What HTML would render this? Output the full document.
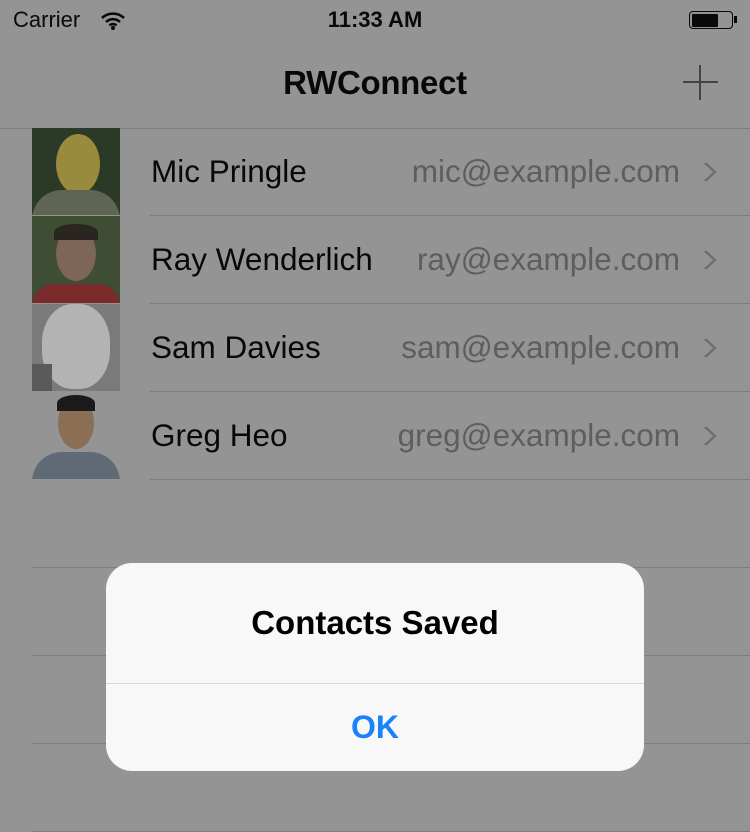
<!DOCTYPE html>
<html><head><style>
body{margin:0;width:750px;height:832px;background:#949494;font-family:"Liberation Sans",sans-serif;position:relative;overflow:hidden}
.a{position:absolute}
.sep{position:absolute;height:1px;background:#7e7e7e;right:0}
.name{position:absolute;left:151px;font-size:31.5px;color:#080808;line-height:40px}
.mail{position:absolute;right:70px;font-size:31.5px;color:#5e5e5e;line-height:40px}
.chev{position:absolute;left:702px}
.av{position:absolute;left:32px;width:88px;height:87px;overflow:hidden}
</style></head><body>
<div class="a" style="left:13px;top:7px;font-size:22px;color:#0a0a0a">Carrier</div>
<svg class="a" style="left:100px;top:11px" width="26" height="19" viewBox="0 0 26 19"><path d="M2 7a16 16 0 0 1 22 0M6 11a10 10 0 0 1 14 0M9.5 14.5a5 5 0 0 1 7 0" stroke="#0a0a0a" stroke-width="2.6" fill="none"/><circle cx="13" cy="17" r="2" fill="#0a0a0a"/></svg>
<div class="a" style="left:0;width:750px;text-align:center;top:7px;font-size:22px;font-weight:bold;color:#0a0a0a">11:33 AM</div>
<div class="a" style="left:689px;top:11px;width:42px;height:16px;border:1.5px solid #0a0a0a;border-radius:4px"></div>
<div class="a" style="left:692px;top:14px;width:26px;height:13px;background:#0a0a0a;border-radius:1px"></div>
<div class="a" style="left:734px;top:16px;width:3px;height:7px;background:#0a0a0a"></div>
<div class="a" style="left:0;width:750px;text-align:center;top:64px;font-size:33px;font-weight:bold;color:#080808;letter-spacing:-0.3px">RWConnect</div>
<div class="a" style="left:683px;top:81px;width:35px;height:2px;background:#444"></div>
<div class="a" style="left:699px;top:65px;width:2px;height:35px;background:#444"></div>
<div class="sep" style="left:0;top:128px"></div>

<div class="av" style="top:128px;background:#2b3a26"><div class="a" style="left:24px;top:6px;width:44px;height:60px;border-radius:50%;background:#9a8a3e"></div><div class="a" style="left:0;top:62px;width:88px;height:30px;background:#5f6552;border-radius:30px 30px 0 0"></div></div>
<div class="av" style="top:216px;background:#3e4d33"><div class="a" style="left:24px;top:10px;width:40px;height:55px;border-radius:50%;background:#7d6655"></div><div class="a" style="left:22px;top:8px;width:44px;height:16px;border-radius:50% 50% 0 0;background:#2a2520"></div><div class="a" style="left:0;top:68px;width:88px;height:22px;background:#7a2a2a;border-radius:30px 30px 0 0"></div></div>
<div class="av" style="top:304px;background:#7a7a7a"><div class="a" style="left:10px;top:0px;width:68px;height:85px;border-radius:45%;background:#b3b3b3"></div><div class="a" style="left:0;top:60px;width:20px;height:30px;background:#5a5a5a"></div></div>
<div class="av" style="top:392px;background:#949494"><div class="a" style="left:26px;top:5px;width:36px;height:52px;border-radius:50%;background:#8a6f55"></div><div class="a" style="left:25px;top:3px;width:38px;height:16px;border-radius:50% 50% 0 0;background:#1a1a1a"></div><div class="a" style="left:0;top:60px;width:88px;height:30px;background:#5f6a74;border-radius:30px 30px 0 0"></div></div>

<div class="name" style="top:151px">Mic Pringle</div><div class="mail" style="top:151px">mic@example.com</div>
<div class="name" style="top:239px">Ray Wenderlich</div><div class="mail" style="top:239px">ray@example.com</div>
<div class="name" style="top:327px">Sam Davies</div><div class="mail" style="top:327px">sam@example.com</div>
<div class="name" style="top:415px">Greg Heo</div><div class="mail" style="top:415px">greg@example.com</div>
<svg class="chev" style="top:161px" width="16" height="22"><path d="M3 2l10 9-10 9" stroke="#6e6e6e" stroke-width="2.5" fill="none"/></svg>
<svg class="chev" style="top:249px" width="16" height="22"><path d="M3 2l10 9-10 9" stroke="#6e6e6e" stroke-width="2.5" fill="none"/></svg>
<svg class="chev" style="top:337px" width="16" height="22"><path d="M3 2l10 9-10 9" stroke="#6e6e6e" stroke-width="2.5" fill="none"/></svg>
<svg class="chev" style="top:425px" width="16" height="22"><path d="M3 2l10 9-10 9" stroke="#6e6e6e" stroke-width="2.5" fill="none"/></svg>

<div class="sep" style="left:150px;top:215px"></div>
<div class="sep" style="left:150px;top:303px"></div>
<div class="sep" style="left:150px;top:391px"></div>
<div class="sep" style="left:150px;top:479px"></div>
<div class="sep" style="left:32px;top:567px"></div>
<div class="sep" style="left:32px;top:655px"></div>
<div class="sep" style="left:32px;top:743px"></div>
<div class="sep" style="left:32px;top:831px"></div>

<div class="a" style="left:106px;top:563px;width:538px;height:208px;background:#f8f8f8;border-radius:26px;overflow:hidden">
<div class="a" style="left:0;width:538px;top:41px;text-align:center;font-size:33px;font-weight:bold;color:#000">Contacts Saved</div>
<div class="a" style="left:0;width:538px;top:120px;height:1px;background:#d8d8d8"></div>
<div class="a" style="left:0;width:538px;top:146px;text-align:center;font-size:32px;font-weight:bold;color:#1a82fb">OK</div>
</div>
</body></html>
